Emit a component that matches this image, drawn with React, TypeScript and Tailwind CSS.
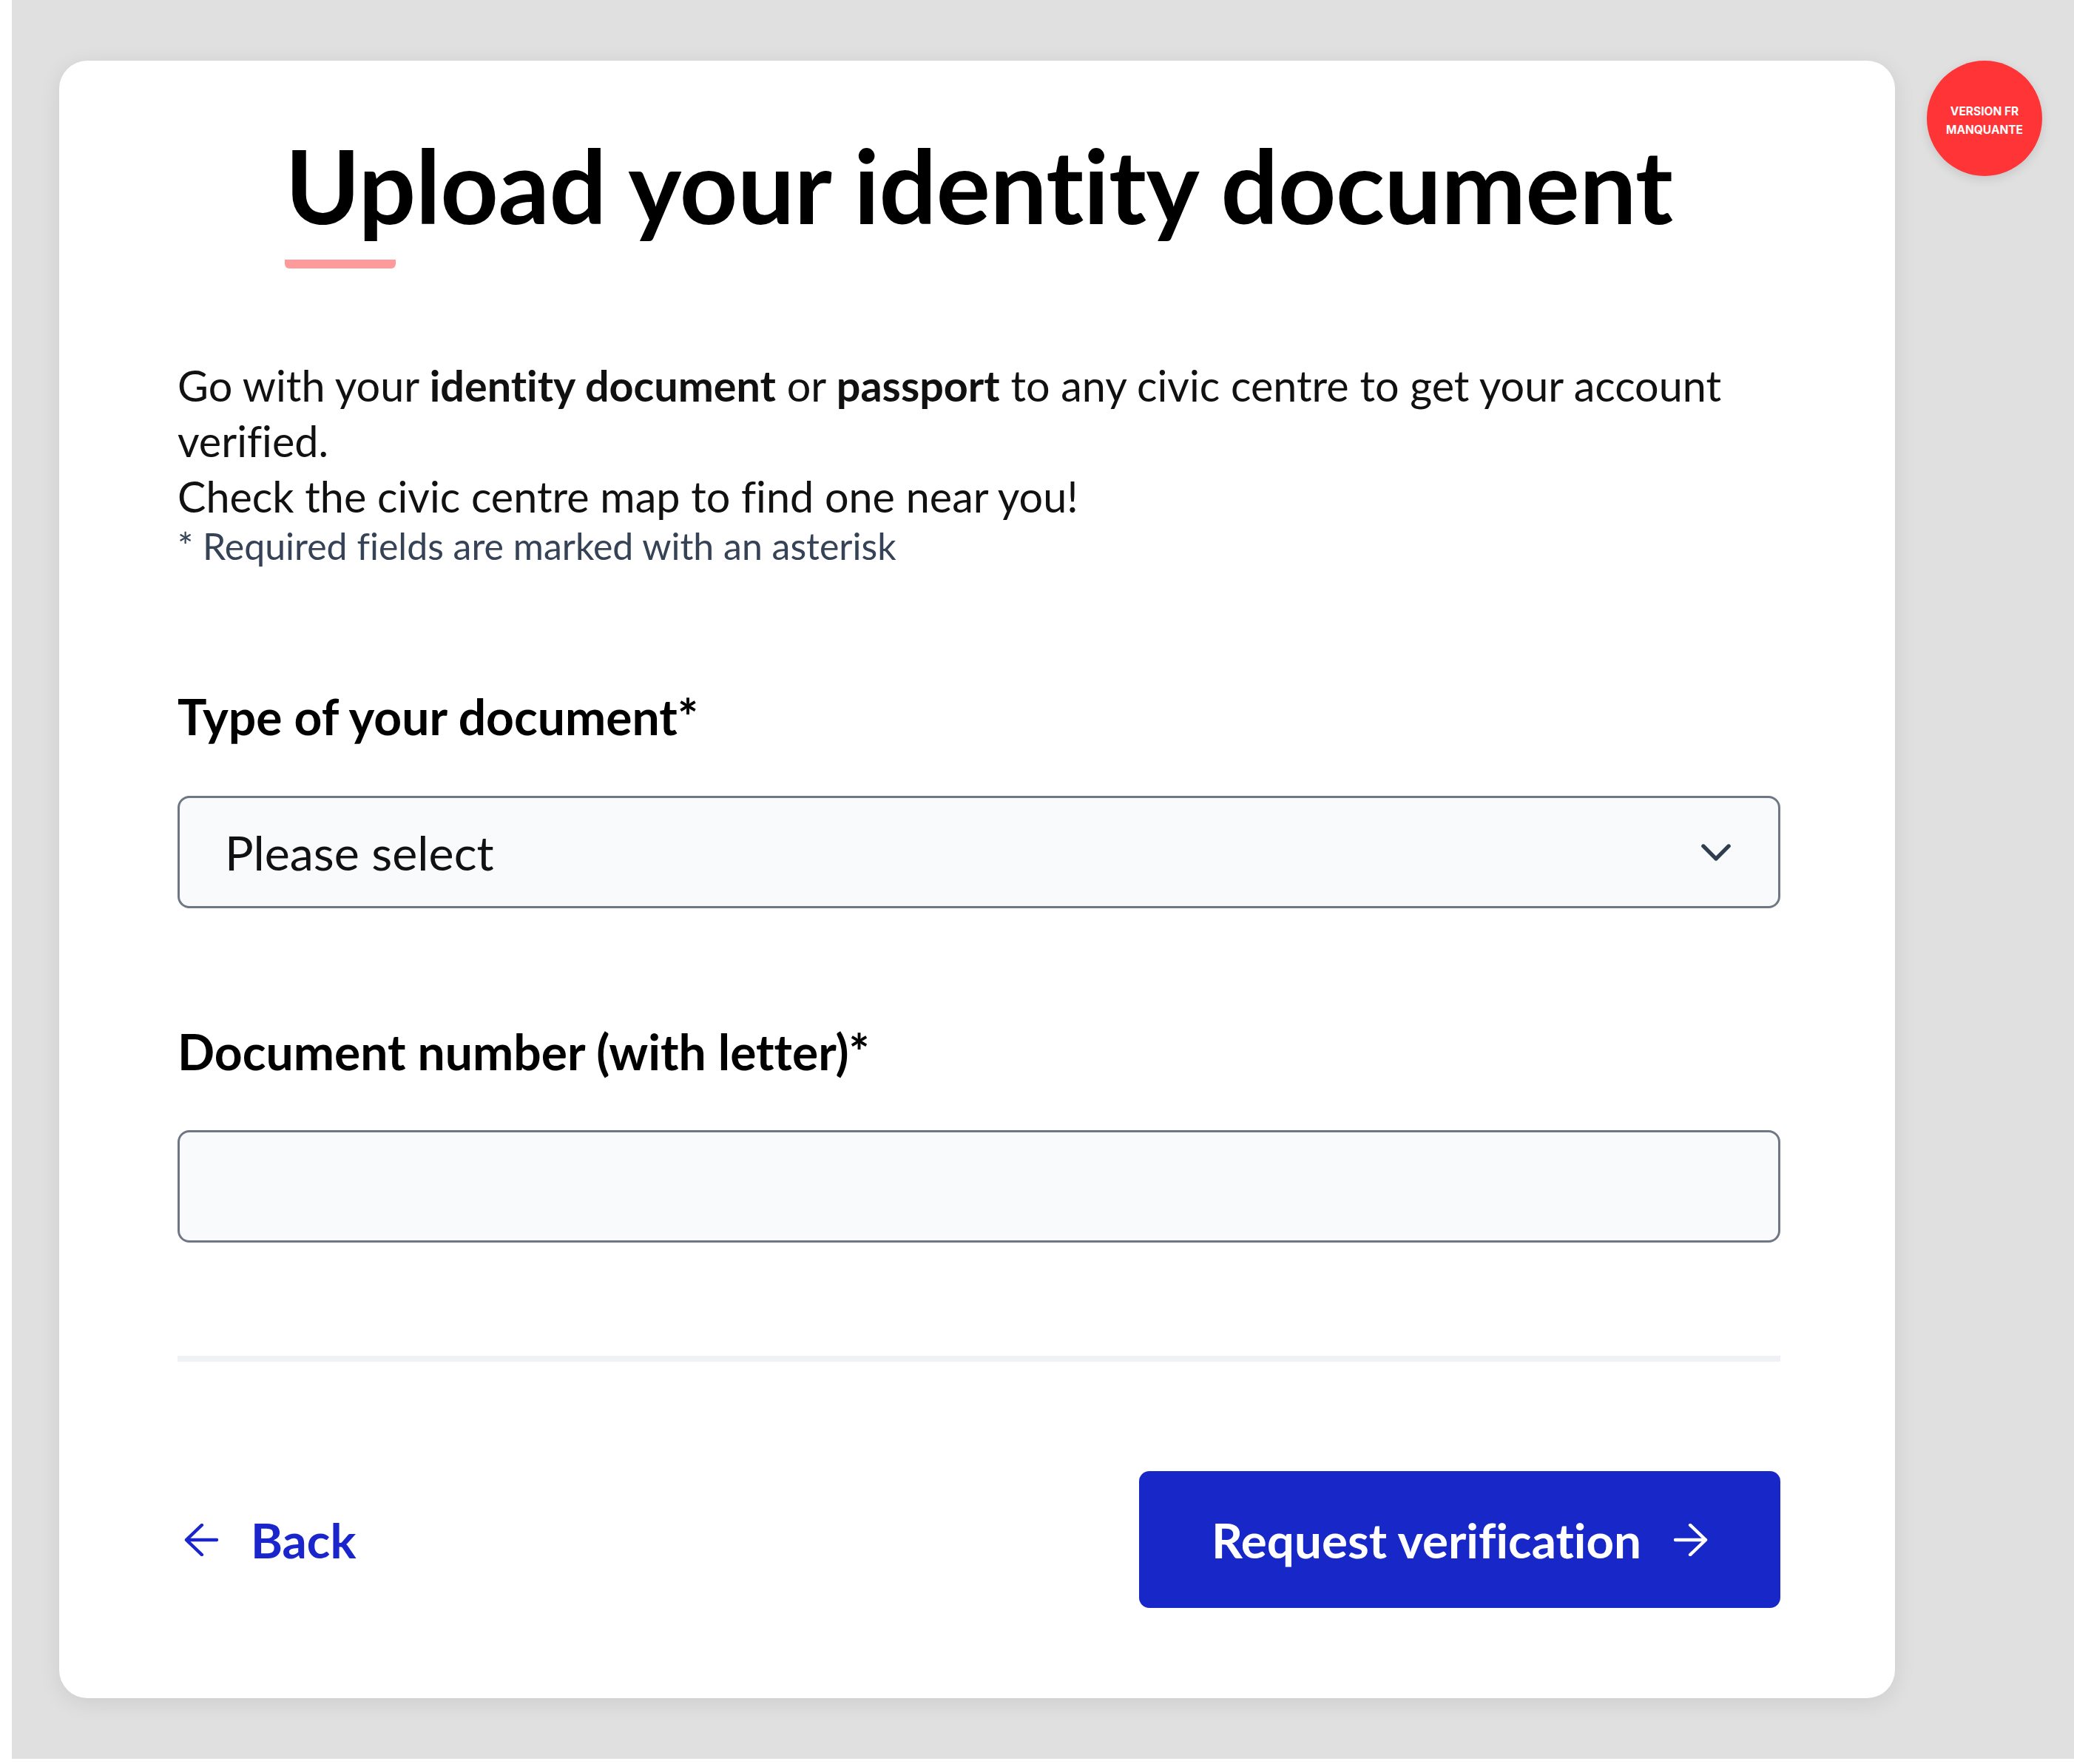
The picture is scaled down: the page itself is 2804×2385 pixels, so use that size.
import type { ReactNode } from "react";

function ArrowLeftIcon({ className }: { className?: string }) {
  return (
    <svg viewBox="0 0 48 46" width="46" height="44" fill="none" stroke="currentColor" strokeWidth="4.5" strokeLinecap="round" strokeLinejoin="round" className={className} aria-hidden="true">
      <path d="M25 2 3 23l22 21M3 23h43" />
    </svg>
  );
}

function ArrowRightIcon({ className }: { className?: string }) {
  return (
    <svg viewBox="0 0 48 46" width="46" height="44" fill="none" stroke="currentColor" strokeWidth="4.5" strokeLinecap="round" strokeLinejoin="round" className={className} aria-hidden="true">
      <path d="M23 2l22 21-22 21M45 23H2" />
    </svg>
  );
}

function ChevronDownIcon() {
  return (
    <svg viewBox="0 0 42 24" width="40" height="23" fill="none" stroke="#2f3d4f" strokeWidth="5.5" strokeLinecap="round" strokeLinejoin="round" aria-hidden="true">
      <path d="M3 3l18 18L39 3" />
    </svg>
  );
}

function FieldLabel({ children, className }: { children: ReactNode; className: string }) {
  return <label className={`block text-[66px] font-bold leading-[76px] text-black ${className}`}>{children}</label>;
}

export default function App() {
  return (
    <div className="h-[2385px] w-full bg-white pl-[16px] font-['Lato',sans-serif] [font-variant-ligatures:none]">
      <div className="flex h-[2378px] items-start bg-[#e0e0e0] pl-[64px] pt-[82px]">
        <main className="flex w-[2482px] flex-col rounded-[38px] bg-white pb-[122px] pl-[160px] pr-[155px] pt-[93px] shadow-[0_6px_30px_rgba(0,0,0,0.09)]">
          <div className="flex justify-center">
            <div className="flex flex-col items-start">
              <h1 className="text-[137px] font-bold leading-[150px] tracking-[-0.5px] text-black">
                Upload your identity document
              </h1>
              <span className="mt-[26px] h-[12px] w-[150px] rounded-b-[6px] bg-[#ff9a9a]" />
            </div>
          </div>

          <p className="mt-[120px] text-[57.5px] leading-[75px] text-[#111111]">
            <span>Go with your </span>
            <strong className="font-bold">identity document</strong>
            <span> or </span>
            <strong className="font-bold">passport</strong>
            <span> to any civic centre to get your account</span>
            <br />
            <span>verified.</span>
            <br />
            <span>Check the civic centre map to find one near you!</span>
          </p>
          <p className="text-[50px] leading-[60px] text-[#364357]">
            * Required fields are marked with an asterisk
          </p>

          <FieldLabel className="mt-[163px]">Type of your document*</FieldLabel>
          <button
            type="button"
            className="mt-[69px] flex h-[152px] w-full items-center justify-between rounded-[16px] border-[3px] border-[#6f7784] bg-[#f9fafb] pl-[61px] pr-[64px] text-left"
          >
            <span className="text-[64.5px] leading-none text-[#111111]">Please select</span>
            <ChevronDownIcon />
          </button>

          <FieldLabel className="mt-[156px]">Document number (with letter)*</FieldLabel>
          <input
            type="text"
            aria-label="Document number"
            className="mt-[68px] h-[152px] w-full rounded-[16px] border-[3px] border-[#6f7784] bg-[#f9fafb] px-[61px] text-[64px] outline-none"
          />

          <div className="mt-[153px] h-[8px] w-full bg-[#eff1f4]" />

          <div className="mt-[148px] flex items-center justify-between">
            <a href="#" className="flex items-center gap-[44px] pl-[9px] text-[65.5px] font-bold leading-none text-[#1a26cc]">
              <ArrowLeftIcon />
              Back
            </a>
            <button
              type="button"
              className="flex h-[185px] w-[867px] items-center justify-center gap-[44px] rounded-[14px] bg-[#1828c8] text-[65.5px] font-bold leading-none text-white"
            >
              Request verification
              <ArrowRightIcon />
            </button>
          </div>
        </main>

        <div className="ml-[43px] flex h-[156px] w-[156px] shrink-0 flex-col items-center justify-center rounded-full bg-[#ff3437] pt-[6px] text-center font-['Inter',sans-serif] text-[15.5px] font-bold leading-[25px] text-white shadow-[0_4px_14px_rgba(0,0,0,0.12)]">
          <span>VERSION FR</span>
          <span>MANQUANTE</span>
        </div>
      </div>
    </div>
  );
}
